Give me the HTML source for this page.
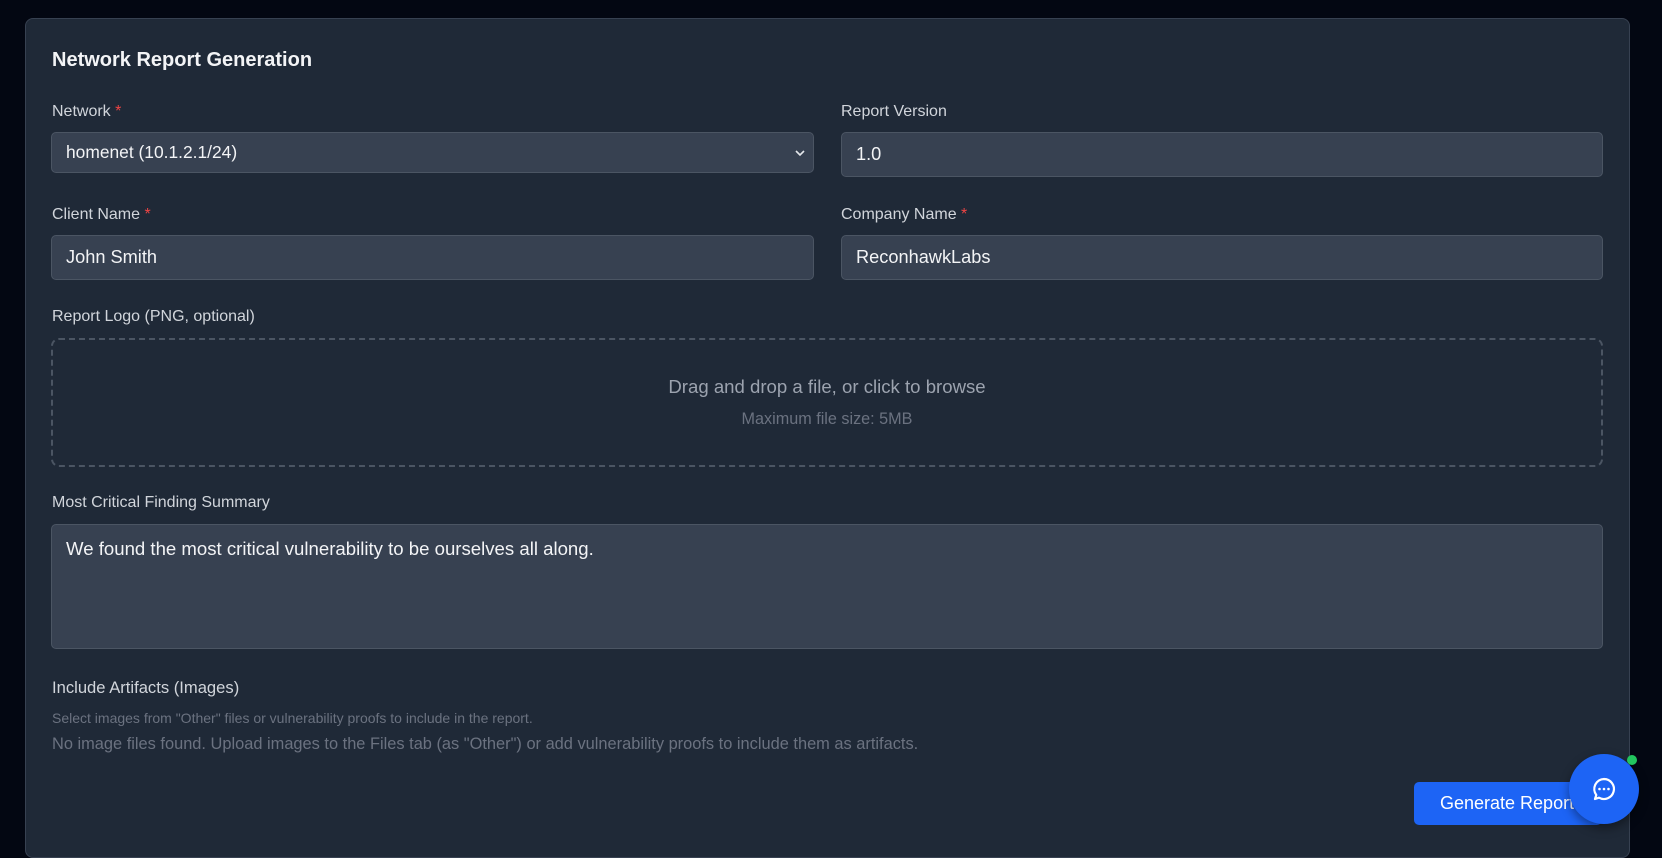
<!DOCTYPE html>
<html><head><style>
*{box-sizing:border-box;margin:0;padding:0}
body{width:1662px;height:842px;background:#030712;font-family:"Liberation Sans",sans-serif;position:relative;overflow:hidden}
.card{position:absolute;left:25px;top:18px;width:1605px;height:840px;background:#1f2937;border:1px solid #374151;border-radius:8px}
.a{position:absolute;white-space:nowrap}
.t{left:52px;top:49px;font-size:20px;font-weight:bold;color:#f3f4f6}
.l{font-size:16px;color:#d1d5db}
.l b{color:#ef4444;font-weight:normal}
.in{background:#374151;border:1px solid #4b5563;border-radius:5px;color:#f3f4f6;font-size:18.2px;padding-left:14px;display:flex;align-items:center}
</style></head><body>
<div class="card"></div>
<div class="a t">Network Report Generation</div>
<div class="a l" style="left:52px;top:103px">Network <b>*</b></div>
<div class="a l" style="left:841px;top:103px">Report Version</div>
<div class="a in" style="left:51px;top:132px;width:763px;height:41px;font-size:17.4px">homenet (10.1.2.1/24)
<svg style="position:absolute;right:8px;top:16px" width="10" height="8" viewBox="0 0 10 8"><path d="M1 2l4 4 4-4" fill="none" stroke="#e5e7eb" stroke-width="1.6"/></svg></div>
<div class="a in" style="left:841px;top:132px;width:762px;height:45px">1.0</div>
<div class="a l" style="left:52px;top:206px">Client Name <b>*</b></div>
<div class="a l" style="left:841px;top:206px">Company Name <b>*</b></div>
<div class="a in" style="left:51px;top:235px;width:763px;height:45px">John Smith</div>
<div class="a in" style="left:841px;top:235px;width:762px;height:45px">ReconhawkLabs</div>
<div class="a l" style="left:52px;top:308px">Report Logo (PNG, optional)</div>
<div class="a" style="left:51px;top:338px;width:1552px;height:129px;border:2px dashed #4b5563;border-radius:8px"></div>
<div class="a" style="left:51px;top:376px;width:1552px;text-align:center;font-size:18.6px;color:#9ca3af">Drag and drop a file, or click to browse</div>
<div class="a" style="left:51px;top:410px;width:1552px;text-align:center;font-size:16.2px;color:#6b7280">Maximum file size: 5MB</div>
<div class="a l" style="left:52px;top:494px">Most Critical Finding Summary</div>
<div class="a in" style="left:51px;top:524px;width:1552px;height:125px;align-items:flex-start;padding-top:13px;font-size:18.6px">We found the most critical vulnerability to be ourselves all along.</div>
<div class="a l" style="left:52px;top:678px;font-size:16.6px">Include Artifacts (Images)</div>
<div class="a" style="left:52px;top:710px;font-size:14px;color:#6b7280">Select images from "Other" files or vulnerability proofs to include in the report.</div>
<div class="a" style="left:52px;top:735px;font-size:16.4px;color:#6b7280">No image files found. Upload images to the Files tab (as "Other") or add vulnerability proofs to include them as artifacts.</div>
<div class="a" style="left:1414px;top:782px;width:188px;height:43px;background:#1d64f5;border-radius:5px;color:#fff;font-size:18px;line-height:43px;padding-left:26px;white-space:nowrap;overflow:hidden">Generate Report</div>
<div class="a" style="left:1569px;top:754px;width:70px;height:70px;border-radius:50%;background:#1d64f5;box-shadow:0 4px 10px rgba(0,0,0,.4)">
<svg style="position:absolute;left:22px;top:22px" width="26" height="26" viewBox="0 0 26 26"><path d="M13 3a10 10 0 1 1-5 18.7L4 23l1.3-4A10 10 0 0 1 13 3z" fill="none" stroke="#fff" stroke-width="2.2" stroke-linejoin="round"/><circle cx="8.5" cy="13" r="1.3" fill="#fff"/><circle cx="13" cy="13" r="1.3" fill="#fff"/><circle cx="17.5" cy="13" r="1.3" fill="#fff"/></svg></div>
<div class="a" style="left:1627px;top:755px;width:10px;height:10px;border-radius:50%;background:#22c55e"></div>
</body></html>
